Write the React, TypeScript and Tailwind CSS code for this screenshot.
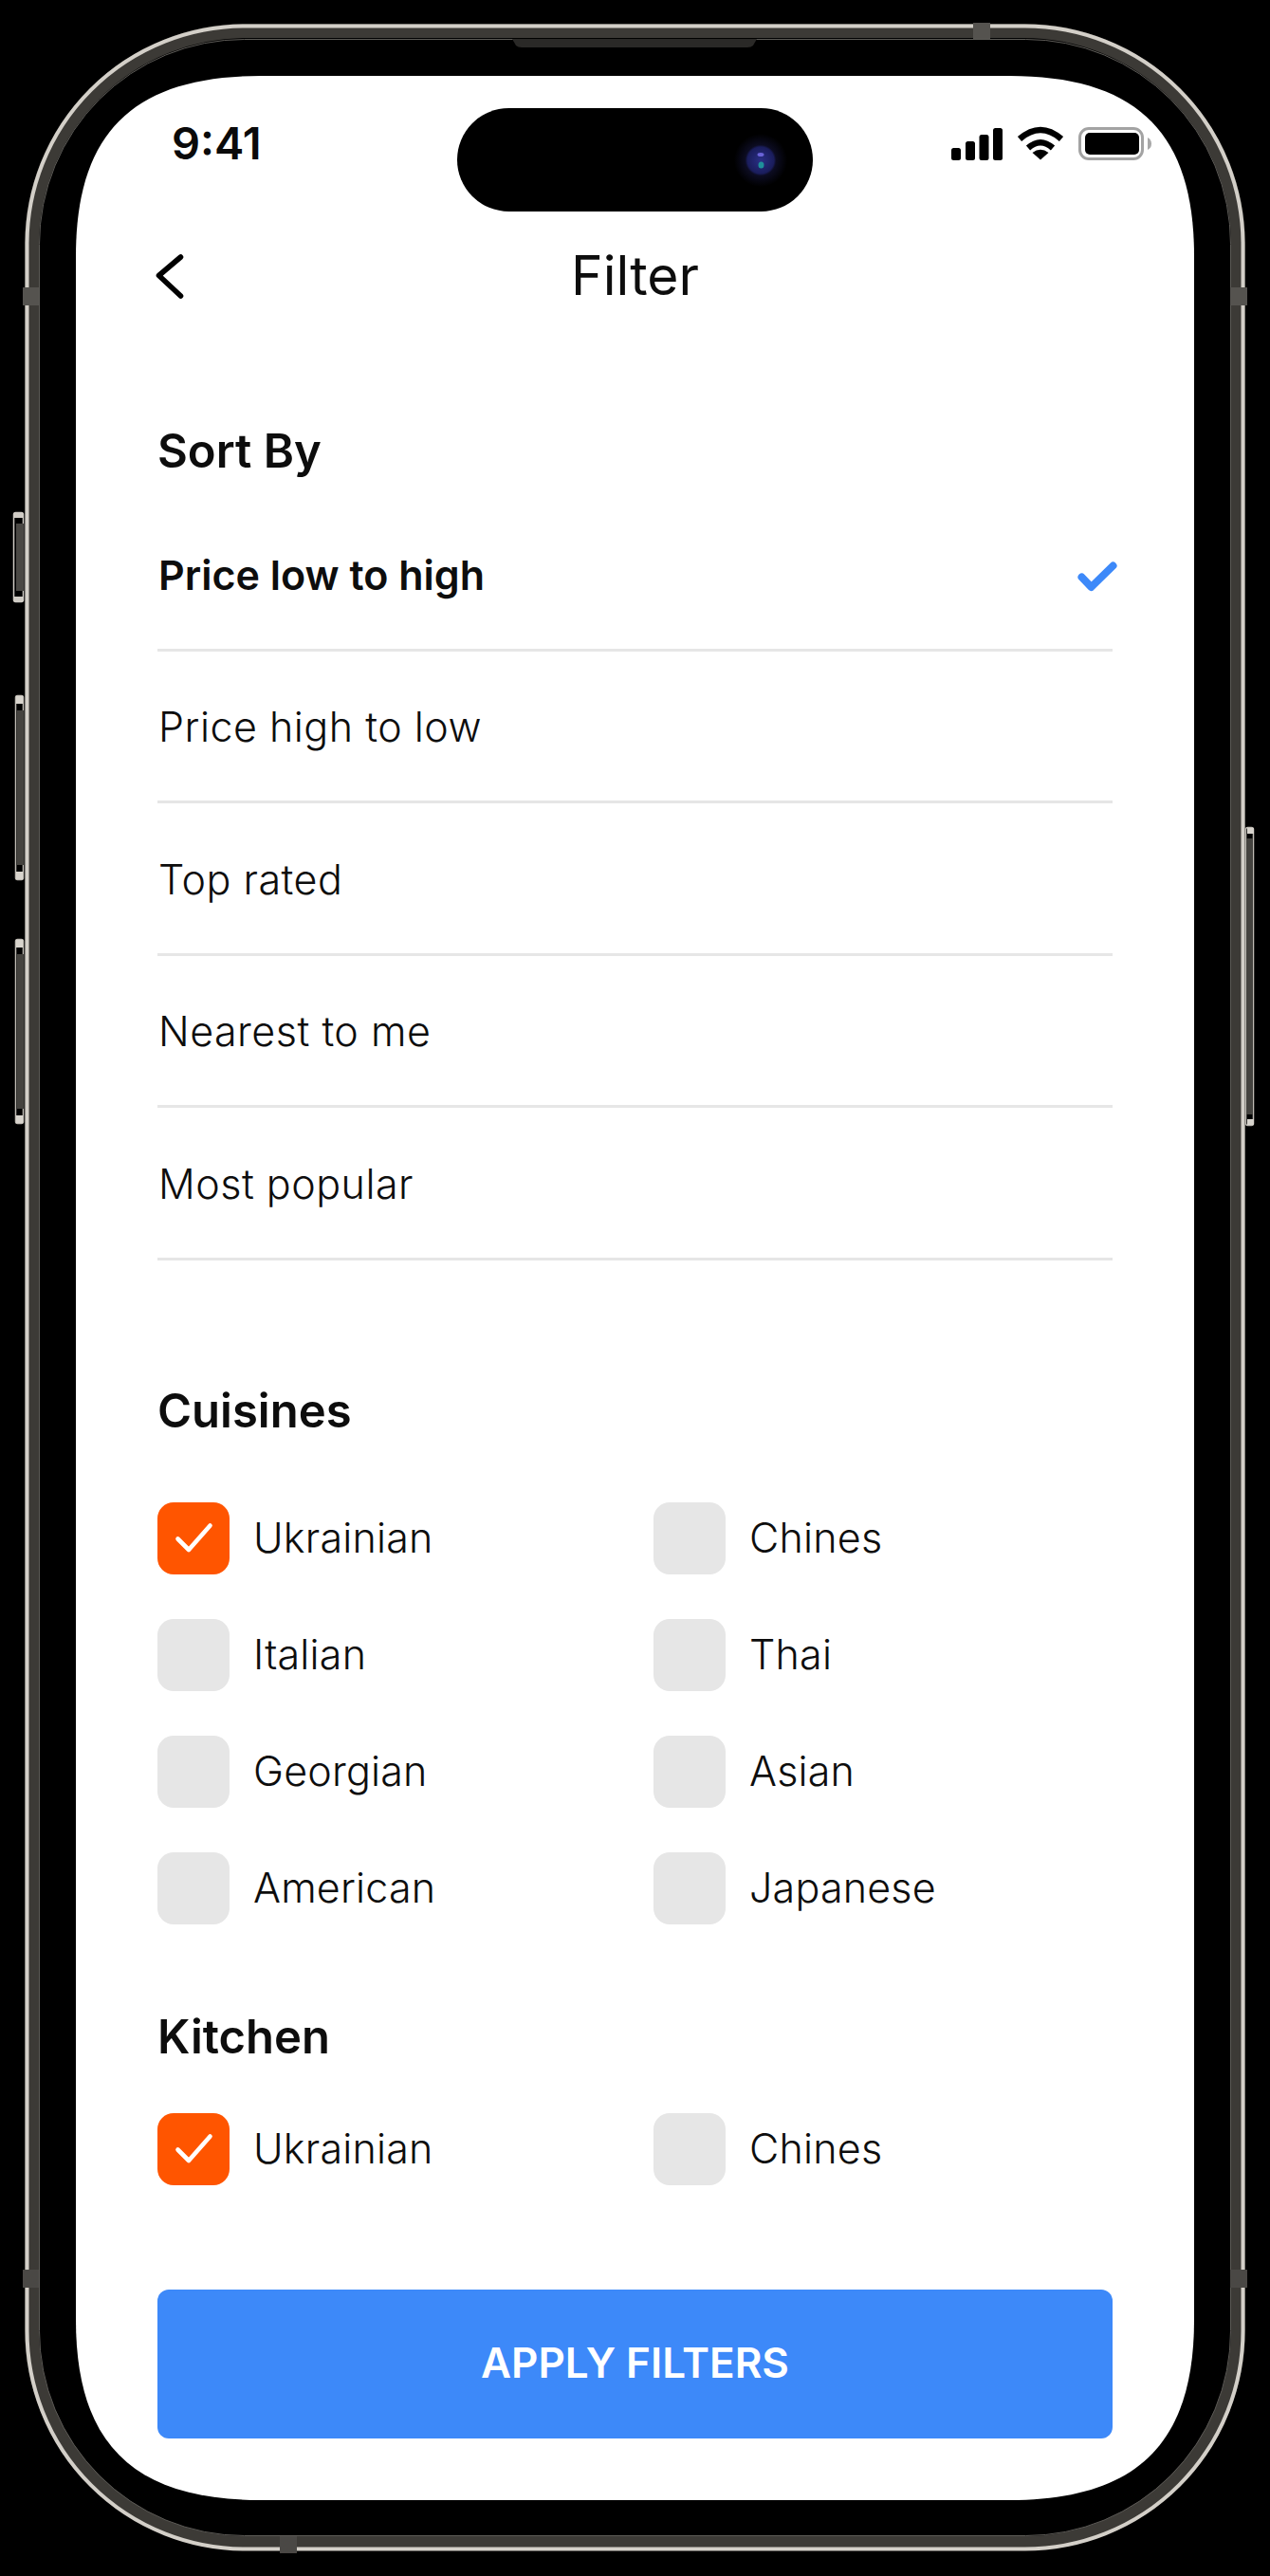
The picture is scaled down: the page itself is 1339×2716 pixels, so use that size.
const font = "font-['Inter','Noto_Sans',sans-serif]";

function Tick() {
  return (
    <svg width="76" height="76" viewBox="0 0 76 76" fill="none">
      <path d="M21.5 38.5 L33 50 L55.5 24.5" stroke="#fff" strokeWidth="4.6" strokeLinecap="round" strokeLinejoin="round" />
    </svg>
  );
}

function Option({ label, on }: { label: string; on?: boolean }) {
  return (
    <div className="flex items-center gap-[25px] h-[76px]">
      <div className={on ? "w-[76px] h-[76px] rounded-[17px] bg-[#ff5500]" : "w-[76px] h-[76px] rounded-[17px] bg-[#e6e6e6]"}>
        {on && <Tick />}
      </div>
      <span className="text-[43px] leading-[60px] font-light tracking-[0.2px] text-[#0d0d0d] -mt-[2px]">{label}</span>
    </div>
  );
}

function SortRow({ label, on }: { label: string; on?: boolean }) {
  return (
    <div className="flex items-center justify-between h-[160.5px] pl-[1px] border-b-[3px] border-[#e6e6e6]">
      <span className={on ? "text-[43px] leading-[60px] font-semibold mt-[2px] text-[#0d0d0d]" : "text-[43px] leading-[60px] font-light tracking-[0.5px] mt-[2px] text-[#0d0d0d]"}>{label}</span>
      {on && (
        <svg width="44" height="36" viewBox="0 0 44 36" fill="none" className="-mr-[7px] mt-[10px]">
          <path d="M4.5 16.5 L14.5 27 L37.5 4.5" stroke="#3d89f9" strokeWidth="8" strokeLinecap="round" strokeLinejoin="round" />
        </svg>
      )}
    </div>
  );
}

function Heading({ children, className }: { children: string; className: string }) {
  return <h2 className={"text-[49px] leading-[60px] font-semibold pt-[2px] -mb-[2px] text-[#0d0d0d] " + className}>{children}</h2>;
}

function Bezel() {
  return (
    <svg width="1339" height="2716" viewBox="0 0 1339 2716" fill="none" className="absolute left-0 top-0">
      <defs>
        <radialGradient id="lens">
          <stop offset="0" stopColor="#2a2f86" />
          <stop offset="0.5" stopColor="#1a1d5c" />
          <stop offset="0.58" stopColor="#0c0c22" />
          <stop offset="1" stopColor="#000" />
        </radialGradient>
      </defs>
      {/* side buttons */}
      <rect x="14.5" y="540.5" width="10" height="94" rx="2" fill="#000" stroke="#d0ccc5" strokeWidth="1.5" />
      <rect x="17" y="552" width="8" height="71" fill="#4a4844" />
      <rect x="15" y="540" width="9" height="6" fill="#d0ccc5" />
      <rect x="15" y="629" width="9" height="6" fill="#d0ccc5" />
      <rect x="16.5" y="733.5" width="8" height="194" rx="2" fill="#000" stroke="#c0bcb5" strokeWidth="1.5" />
      <rect x="18" y="749" width="7" height="163" fill="#45433f" />
      <rect x="17" y="734" width="7" height="8" fill="#d8d4cd" />
      <rect x="17" y="919" width="7" height="8" fill="#d8d4cd" />
      <rect x="16.5" y="990.5" width="8" height="194" rx="2" fill="#000" stroke="#c0bcb5" strokeWidth="1.5" />
      <rect x="18" y="1006" width="7" height="163" fill="#45433f" />
      <rect x="17" y="991" width="7" height="8" fill="#d8d4cd" />
      <rect x="17" y="1176" width="7" height="8" fill="#d8d4cd" />
      <rect x="1313.5" y="872.5" width="8" height="314" rx="2" fill="#000" stroke="#c0bcb5" strokeWidth="1.5" />
      <rect x="1314" y="884" width="7" height="291" fill="#45433f" />
      <rect x="1315" y="873" width="7" height="6" fill="#d8d4cd" />
      <rect x="1315" y="1180" width="7" height="6" fill="#d8d4cd" />
      {/* band */}
      <rect x="33.5" y="32.5" width="1272" height="2649" rx="226" stroke="#3c3a36" strokeWidth="15" />
      <rect x="28.5" y="27.5" width="1282" height="2660" rx="230" stroke="#d3cfc8" strokeWidth="4" />
      <rect x="41.5" y="41.5" width="1256" height="2632" rx="216" stroke="#5c5a56" strokeWidth="1" />
      {/* antenna seams */}
      <rect x="24" y="303" width="17" height="19" fill="#55534f" />
      <rect x="1297" y="303" width="18" height="19" fill="#55534f" />
      <rect x="24" y="2393" width="17" height="19" fill="#4a4845" />
      <rect x="1297" y="2393" width="18" height="19" fill="#4a4845" />
      <rect x="1026" y="24" width="18" height="17" fill="#55534f" />
      <rect x="295" y="2674" width="18" height="18" fill="#4a4845" />
      {/* earpiece */}
      <path d="M540 41 H798 L794 48 Q792 50 788 50 H550 Q546 50 544 48 Z" fill="#2a2927" />
    </svg>
  );
}

function StatusIcons() {
  return (
    <div className="flex items-start">
      <svg width="54" height="34" viewBox="0 0 54 34" fill="#000" className="mt-px">
        <rect x="0" y="21" width="10" height="13" rx="2.5" />
        <rect x="15" y="14" width="10" height="20" rx="2.5" />
        <rect x="29.5" y="7" width="10" height="27" rx="2.5" />
        <rect x="44" y="0" width="10" height="34" rx="2.5" />
      </svg>
      <svg width="50" height="36" viewBox="0 0 50 36" fill="none" className="ml-[15px] -mt-px">
        <path d="M3 13.5 Q25 -5.5 47 13.5" stroke="#000" strokeWidth="6.4" />
        <path d="M12 23 Q25 11.5 38 23" stroke="#000" strokeWidth="6.4" />
        <path d="M25 35.5 L16.5 28 Q25 21.5 33.5 28 Z" fill="#000" />
      </svg>
      <svg width="78" height="36" viewBox="0 0 78 36" fill="none" className="ml-[15px]">
        <rect x="1.5" y="1.5" width="66" height="32" rx="9.5" stroke="#a3a3a3" strokeWidth="3" />
        <rect x="7" y="6" width="57" height="23" rx="5" fill="#000" />
        <path d="M73 11 Q77 13 77 17.5 Q77 22 73 24 Z" fill="#a8a8a8" />
      </svg>
    </div>
  );
}

export default function App() {
  return (
    <div className={"relative w-[1339px] h-[2716px] bg-black p-[80px] " + font}>
      <Bezel />
      <main className="relative w-[1179px] h-[2556px] bg-white px-[86px] [clip-path:path('M0,190C0,60,60,0,195,0H984C1119,0,1179,60,1179,190V2366C1179,2496,1119,2556,984,2556H195C60,2556,0,2496,0,2366Z')]">
        {/* dynamic island */}
        <div className="absolute left-[402px] top-[34px] w-[375px] h-[109px] rounded-full bg-black">
          <svg width="60" height="60" viewBox="0 0 60 60" className="absolute left-[290px] top-[25px]">
            <circle cx="30" cy="30" r="28" fill="url(#lens)" />
            <ellipse cx="30" cy="24" rx="3.5" ry="2" fill="#6a63d8" />
            <ellipse cx="30.5" cy="35" rx="3" ry="3.5" fill="#1f8f9a" />
          </svg>
        </div>
        <div className="flex items-start justify-between pt-[54px] h-[88px] -mr-[42px] pl-[15px]">
          <span className="text-[47px] leading-[34px] font-semibold text-[#0a0a0a]">9:41</span>
          <StatusIcons />
        </div>
        <header className="relative flex items-center justify-center mt-[78px] h-[88px]">
          <svg width="32" height="50" viewBox="0 0 32 50" fill="none" className="absolute -left-[2px] top-[20px]">
            <path d="M26.5 5 L3.5 24.5 L26.5 46" stroke="#000" strokeWidth="5.6" strokeLinecap="round" strokeLinejoin="round" />
          </svg>
          <h1 className="text-[57px] leading-[60px] font-normal mt-[2px] text-[#0d0d0d]">Filter</h1>
        </header>
        <Heading className="mt-[110px]">Sort By</Heading>
        <div className="mt-[22px]">
          {["Price low to high", "Price high to low", "Top rated", "Nearest to me", "Most popular"].map((l, i) => (
            <SortRow key={l} label={l} on={i === 0} />
          ))}
        </div>
        <Heading className="mt-[127.5px]">Cuisines</Heading>
        <div className="grid grid-cols-[523px_1fr] gap-y-[47px] mt-[68px]">
          {["Ukrainian", "Chines", "Italian", "Thai", "Georgian", "Asian", "American", "Japanese"].map((l, i) => (
            <Option key={l} label={l} on={i === 0} />
          ))}
        </div>
        <Heading className="mt-[87px]">Kitchen</Heading>
        <div className="grid grid-cols-[523px_1fr] mt-[52px]">
          <Option label="Ukrainian" on />
          <Option label="Chines" />
        </div>
        <button className="mt-[110px] w-full h-[157px] pb-[3px] rounded-[12px] bg-[#3d89f9] text-white text-[44px] font-semibold">
          APPLY FILTERS
        </button>
      </main>
    </div>
  );
}
